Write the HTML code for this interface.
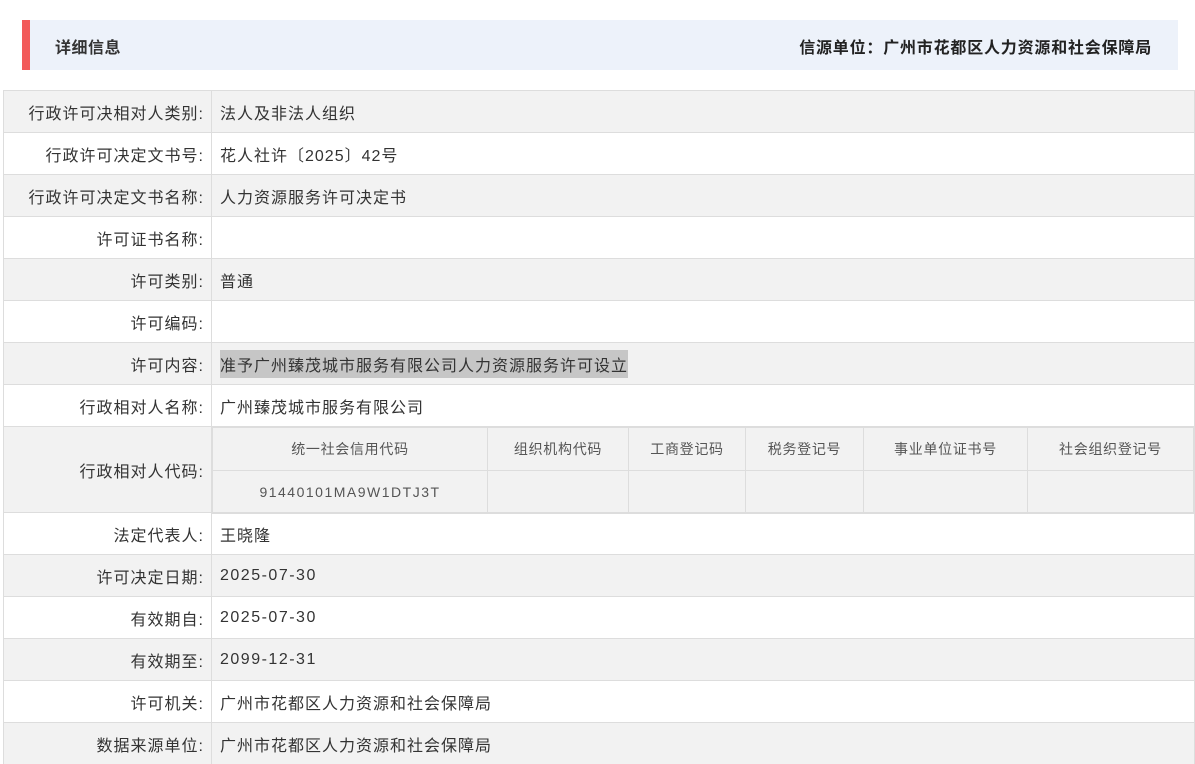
<!DOCTYPE html>
<html><head><meta charset="utf-8"><style>
*{margin:0;padding:0;box-sizing:border-box}
body{width:1195px;height:762px;overflow:hidden;background:#fff;font-family:"Liberation Sans","Noto Sans CJK SC",sans-serif;color:#333;font-size:16px;position:relative}
.hd{position:absolute;left:22px;top:20px;width:1156px;height:50px;background:#edf2fa;border-left:8px solid #f25a5a}
.hd .l{position:absolute;left:25px;top:14px;font-weight:bold;font-size:16px;letter-spacing:0.5px;color:#333}
.hd .r{position:absolute;right:26px;top:14px;font-weight:bold;font-size:16px;letter-spacing:0.8px;color:#222}
.row{position:absolute;left:3px;width:1192px;border:1px solid #ddd;border-bottom:none}
.row.g{background:#f2f2f2}
.lab{position:absolute;left:0;top:0;width:208px;height:100%;text-align:right;padding-right:7px;border-right:1px solid #ddd;display:flex;align-items:center;justify-content:flex-end;letter-spacing:1px}
.val{position:absolute;left:216px;top:0;height:100%;display:flex;align-items:center;letter-spacing:1px}
.num{letter-spacing:1.5px}
.hl{background:#c6c6c6}
table{position:absolute;left:208px;top:0;border-collapse:collapse;font-size:14px;color:#555;background:#f2f2f2;letter-spacing:0.7px}
td{border:1px solid #ddd;text-align:center;height:43px;padding:0}
</style></head><body>
<div class="hd"><span class="l">详细信息</span><span class="r">信源单位：广州市花都区人力资源和社会保障局</span></div>

<div class="row g" style="top:90px;height:42px"><div class="lab">行政许可决相对人类别:</div><div class="val">法人及非法人组织</div></div>
<div class="row" style="top:132px;height:42px"><div class="lab">行政许可决定文书号:</div><div class="val">花人社许〔2025〕42号</div></div>
<div class="row g" style="top:174px;height:42px"><div class="lab">行政许可决定文书名称:</div><div class="val">人力资源服务许可决定书</div></div>
<div class="row" style="top:216px;height:42px"><div class="lab">许可证书名称:</div><div class="val"></div></div>
<div class="row g" style="top:258px;height:42px"><div class="lab">许可类别:</div><div class="val">普通</div></div>
<div class="row" style="top:300px;height:42px"><div class="lab">许可编码:</div><div class="val"></div></div>
<div class="row g" style="top:342px;height:42px"><div class="lab">许可内容:</div><div class="val"><span class="hl" style="padding:2px 0">准予广州臻茂城市服务有限公司人力资源服务许可设立</span></div></div>
<div class="row" style="top:384px;height:42px"><div class="lab">行政相对人名称:</div><div class="val">广州臻茂城市服务有限公司</div></div>
<div class="row g" style="top:426px;height:86px"><div class="lab">行政相对人代码:</div>
<table style="width:982px"><tr><td style="width:275px">统一社会信用代码</td><td style="width:141px">组织机构代码</td><td style="width:117px">工商登记码</td><td style="width:118px">税务登记号</td><td style="width:164px">事业单位证书号</td><td>社会组织登记号</td></tr>
<tr><td style="letter-spacing:1.5px">91440101MA9W1DTJ3T</td><td></td><td></td><td></td><td></td><td></td></tr></table></div>
<div class="row" style="top:512px;height:42px"><div class="lab">法定代表人:</div><div class="val">王晓隆</div></div>
<div class="row g" style="top:554px;height:42px"><div class="lab">许可决定日期:</div><div class="val num">2025-07-30</div></div>
<div class="row" style="top:596px;height:42px"><div class="lab">有效期自:</div><div class="val num">2025-07-30</div></div>
<div class="row g" style="top:638px;height:42px"><div class="lab">有效期至:</div><div class="val num">2099-12-31</div></div>
<div class="row" style="top:680px;height:42px"><div class="lab">许可机关:</div><div class="val">广州市花都区人力资源和社会保障局</div></div>
<div class="row g" style="top:722px;height:42px"><div class="lab">数据来源单位:</div><div class="val">广州市花都区人力资源和社会保障局</div></div>
</body></html>
